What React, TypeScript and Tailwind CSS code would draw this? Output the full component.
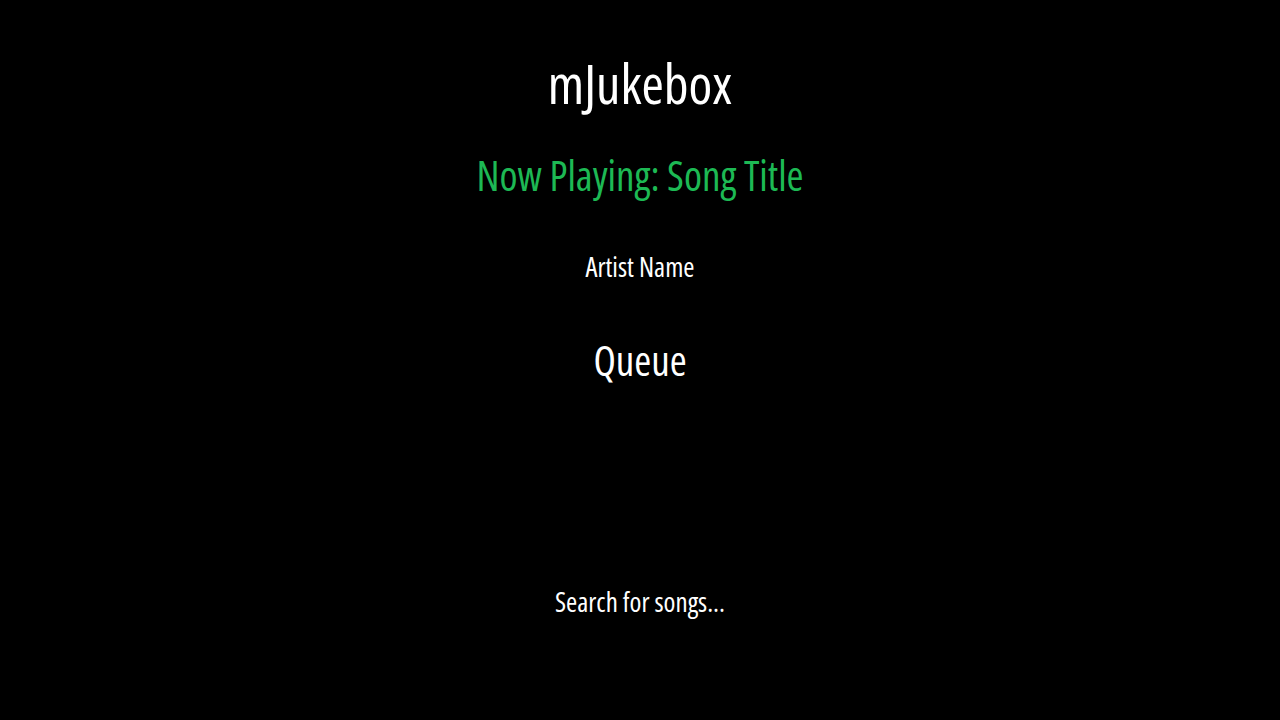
import React from "react";

export default function App() {
  return (
    <div className="min-h-screen w-full bg-black text-white flex flex-col items-center font-['Open_Sans',sans-serif] [font-stretch:75%]">
      <h1 className="mt-[56px] text-[54px] leading-none">mJukebox</h1>
      <h2 className="mt-[45px] text-[41px] leading-none text-[#1db954]">Now Playing: Song Title</h2>
      <p className="mt-[57px] text-[27px] leading-none">Artist Name</p>
      <h3 className="mt-[60px] text-[41px] leading-none">Queue</h3>
      <ul className="mt-[207px] flex flex-col items-center">
        <li className="text-[27px] leading-none">Search for songs...</li>
      </ul>
    </div>
  );
}
